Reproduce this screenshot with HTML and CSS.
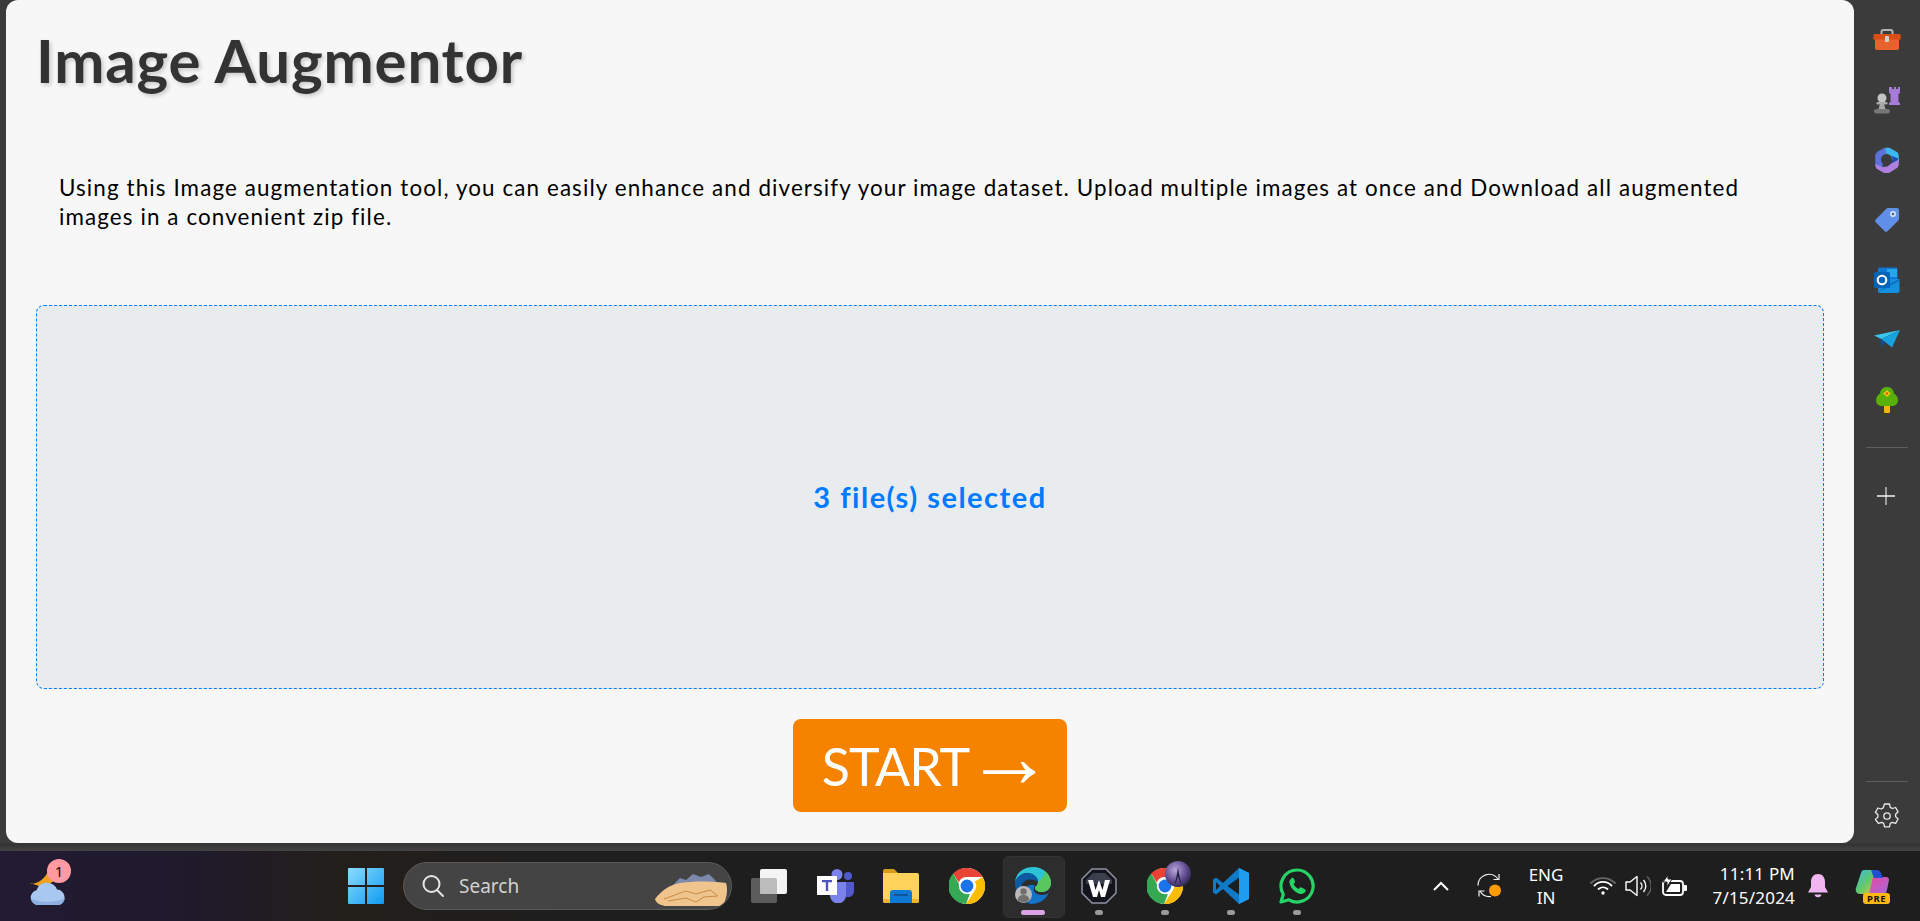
FILE: index.html
```html
<!DOCTYPE html>
<html>
<head>
    <meta charset="utf-8" />
    <title>Image Augmentor</title>
    <link rel="stylesheet" href="styles.css">
</head>
<body>
    <svg class="defs" width="0" height="0">
        <symbol id="chrome" viewBox="0 0 36 36">
            <circle cx="18" cy="18" r="18" fill="#fff" />
            <path d="M18 0a18 18 0 0 1 15.600 9H18a9 9 0 0 0-8.300 5.400L4.200 5.600A18 18 0 0 1 18 0z" fill="#ea4335" />
            <path d="M33.600 9A18 18 0 0 1 17 36l7.400-11.600A9 9 0 0 0 25.800 13.500z" fill="#fbbc04" />
            <path d="M17 36A18 18 0 0 1 4.200 5.600L11 18a8 8 0 0 0 10 7.800z" fill="#34a853" />
            <circle cx="18" cy="18" r="8.200" fill="#fff" />
            <circle cx="18" cy="18" r="6.400" fill="#1a73e8" />
        </symbol>
    </svg>

    <div class="window">
        <main class="panel">
            <h1 class="title">Image Augmentor</h1>
            <p class="intro">Using this Image augmentation tool, you can easily enhance and diversify your image dataset. Upload multiple images at once and Download all augmented images in a convenient zip file.</p>
            <div class="dropzone">3 file(s) selected</div>
            <div class="actions">
                <button class="start-btn"><span>START</span><span class="arrow">→</span></button>
            </div>
        </main>

        <aside class="sidebar">
            <div class="side-apps">
                <div class="side-icon">
                    <svg width="28" height="22" viewBox="0 0 28 22">
                        <path d="M8.500 6V3a2 2 0 0 1 2-2h7a2 2 0 0 1 2 2v3" fill="none" stroke="#b5b5b5" stroke-width="2" />
                        <path d="M2 7h24v12a2 2 0 0 1-2 2H4a2 2 0 0 1-2-2z" fill="#e8622c" />
                        <path d="M1.500 5h25a1 1 0 0 1 1 1l.5 4.500H0L.5 6a1 1 0 0 1 1-1z" fill="#d84e14" />
                        <rect x="12" y="7" width="4" height="6" rx="1" fill="#cfcfcf" />
                    </svg>
                </div>
                <div class="side-icon">
                    <svg width="28" height="28" viewBox="0 0 28 28">
                        <path d="M16 1h2v2h2V1h2v2h2V1h2v6l-1.500 1v8l1.500 1v2H15v-2l1.500-1V8L15 7V1z" fill="#a77bd8" transform="translate(1 0)" />
                        <circle cx="9" cy="12" r="4.500" fill="#c4c4c4" />
                        <rect x="3.500" y="16" width="11" height="2.500" rx="1.200" fill="#aaa" />
                        <path d="M7 18h4l1.500 5h-7z" fill="#a8a8a8" />
                        <rect x="1" y="23" width="16" height="4.500" rx="2.200" fill="#777" />
                    </svg>
                </div>
                <div class="side-icon">
                    <svg width="24" height="26" viewBox="0 0 24 26" stroke-width="1.500" stroke-linejoin="round">
                        <path d="M10 1.500L2.500 5.500 1 8v10l1.500 2.500L7 23V9.500L12 6.500z" fill="#5b72d8" stroke="#5b72d8" />
                        <path d="M11 1.500h3L22 6l1 2v7l-6-3.500-1-3.500-4-2z" fill="#3fb7ee" stroke="#3fb7ee" />
                        <path d="M1 18l6 3 6-1 4-3.500 6-3.500v5l-1 2-8 5c-2 1-3 1-5 0l-7-4z" fill="#b080e0" stroke="#b080e0" />
                        <path d="M16 8.500c2 2.500 2 6-.5 8.500l7.500-4v-1.500z" fill="#1d4fa8" stroke="none" />
                        <circle cx="11.500" cy="12.500" r="5.500" fill="#3b3b3b" stroke="none" />
                    </svg>
                </div>
                <div class="side-icon">
                    <svg width="26" height="26" viewBox="0 0 26 26">
                        <path d="M14 1h9a2 2 0 0 1 2 2v9a2 2 0 0 1-.6 1.400L13.500 24.300a2 2 0 0 1-2.800 0L1.700 15.300a2 2 0 0 1 0-2.800L12.600 1.600A2 2 0 0 1 14 1z" fill="#5f8fe6" />
                        <circle cx="19" cy="7" r="3" fill="#d6e4fb" />
                        <circle cx="19" cy="7" r="1.300" fill="#4a5f85" />
                    </svg>
                </div>
                <div class="side-icon">
                    <svg width="26" height="26" viewBox="0 0 26 26">
                        <path d="M4 2a1.500 1.500 0 0 1 1.500-1.500H22a1.500 1.500 0 0 1 1.500 1.500V12H4z" fill="#0f78d4" />
                        <rect x="13" y="2" width="10" height="8" fill="#28a8ea" />
                        <path d="M4 12h21.500v12a2 2 0 0 1-2 2H6a2 2 0 0 1-2-2z" fill="#1490df" />
                        <path d="M4 25l21.500-11V12L13 18z" fill="#0a5ba8" opacity=".6" />
                        <rect x="0" y="5" width="16" height="16" rx="1.500" fill="#0364b8" />
                        <circle cx="8" cy="13" r="4.300" fill="none" stroke="#fff" stroke-width="2" />
                    </svg>
                </div>
                <div class="side-icon">
                    <svg width="26" height="20" viewBox="0 0 26 20">
                        <path d="M0 5.500L26 0 7.500 9z" fill="#3cc4f0" />
                        <path d="M7.500 9L26 0 18 17.500z" fill="#16a3e0" />
                        <path d="M6.500 9l1 8 3.500-5z" fill="#0b4f9e" />
                        <path d="M0 5.500l6.500 3.500h1z" fill="#1c8fd6" />
                    </svg>
                </div>
                <div class="side-icon">
                    <svg width="22" height="26" viewBox="0 0 22 26">
                        <rect x="8" y="17" width="6" height="9" rx="1" fill="#f2b50c" />
                        <path d="M11 0c4 0 6.500 2.500 7 6.500 2.500 1.500 4 4 4 7 0 3-2.500 5.500-5.500 5.500h-11C2.500 19 0 16.500 0 13.500c0-3 1.500-5.500 4-7C4.500 2.500 7 0 11 0z" fill="#5ab00a" />
                        <path d="M11 3l2 2 2 1.500-2 1.500-2 2-2-2-2-1.500L9 5z" fill="#f7c412" />
                        <circle cx="11" cy="6.500" r="1.300" fill="#e8531d" />
                    </svg>
                </div>
            </div>
            <div class="side-sep"></div>
            <div class="side-add">
                <svg width="18" height="18" viewBox="0 0 18 18">
                    <path d="M0 9h18" stroke="#c6c6c6" stroke-width="2" />
                    <path d="M9 0v18" stroke="#fff" stroke-width="1" />
                </svg>
            </div>
            <div class="side-sep side-sep-end"></div>
            <div class="side-gear">
                <svg width="26" height="26" viewBox="0 0 26 26" fill="none" stroke="#ececec" stroke-width="1.300">
                    <path d="M10.500 1h5l.8 3.400 2 1.100 3.300-1 2.500 4.300-2.500 2.400v2.400l2.500 2.400-2.500 4.300-3.300-1-2 1.100-.8 3.400h-5l-.8-3.400-2-1.100-3.300 1L1.400 16.500l2.500-2.400v-2.400L1.400 9.300l2.500-4.300 3.300 1 2-1.100z" stroke-linejoin="round" />
                    <circle cx="13" cy="13" r="3.200" />
                </svg>
            </div>
        </aside>
    </div>

    <footer class="taskbar">
        <div class="weather">
            <svg width="36" height="36" viewBox="0 0 36 36">
                <path d="M19 0c-1 5 0 9 6 11l-11 8C8 17 2 14 0 15c8 0 16-6 19-15z" fill="#f0a020" />
                <path d="M8 36a7.500 7.500 0 0 1-1.500-14.800A11 11 0 0 1 27 20.500a7.800 7.800 0 0 1 1 15.500z" fill="#a9c8ef" />
                <path d="M1 29c6 5 26 5 34 0-1 4-3 7-7 7H8c-4 0-6-3-7-7z" fill="#8fb0e2" />
            </svg>
            <span class="weather-badge">1</span>
        </div>

        <div class="tb-start">
            <svg width="36" height="36" viewBox="0 0 36 36">
                <defs>
                    <linearGradient id="win" x1="0" y1="0" x2="1" y2="1">
                        <stop offset="0" stop-color="#8adcff" />
                        <stop offset="1" stop-color="#0f9bf0" />
                    </linearGradient>
                </defs>
                <path d="M1 0h16v17H0V1a1 1 0 0 1 1-1zM19 0h16a1 1 0 0 1 1 1v16H19zM0 19h17v17H1a1 1 0 0 1-1-1zM19 19h17v16a1 1 0 0 1-1 1H19z" fill="url(#win)" />
            </svg>
        </div>

        <div class="tb-search">
            <svg width="24" height="24" viewBox="0 0 24 24" fill="none" stroke="#e6e6e6" stroke-width="2">
                <circle cx="10.500" cy="10" r="8" />
                <path d="M16 16l6 6" stroke-linecap="round" />
            </svg>
            <span class="search-label">Search</span>
            <svg class="search-art" width="74" height="34" viewBox="0 0 74 34">
                <path d="M18 14l8-8 6 2 7-6 8 3 8-3 6 6 4 5z" fill="#7d88ad" />
                <path d="M1 27c6-8 14-14 25-16 14-2 30-2 46 0 2 6 1 14-3 23H11C6 33 2 31 1 27z" fill="#efc48d" />
                <path d="M10 27l22-8 10 3 14-4 8 6-14 1-8 5-10-4-18 3" fill="none" stroke="#c98a45" stroke-width="1" />
            </svg>
        </div>

        <div class="tb-apps">
            <div class="tb-slot">
                <svg width="36" height="36" viewBox="0 0 36 36">
                    <rect x="0" y="10" width="26" height="25" rx="2" fill="#5c5c5c" />
                    <rect x="9" y="1" width="27" height="25" rx="2" fill="#f4f4f4" />
                    <path d="M9 10h15a2 2 0 0 1 2 2v14H11a2 2 0 0 1-2-2z" fill="#bcbcbc" />
                </svg>
            </div>
            <div class="tb-slot">
                <svg width="37" height="34" viewBox="0 0 37 34">
                    <circle cx="20" cy="5.500" r="5.500" fill="#7b83eb" />
                    <circle cx="31" cy="7" r="4" fill="#5059c9" />
                    <path d="M25 13h12v9c0 4-3 6-6 6h-6z" fill="#5059c9" />
                    <path d="M11 13h18v13a8 8 0 0 1-16 1z" fill="#7b83eb" />
                    <rect x="0" y="7" width="20" height="19" fill="#fff" />
                    <path d="M5 11h10v2.200h-3.800V22H8.800v-8.800H5z" fill="#4b53bc" />
                </svg>
            </div>
            <div class="tb-slot">
                <svg width="36" height="34" viewBox="0 0 36 34">
                    <path d="M0 2a2 2 0 0 1 2-2h9l4 4h-15z" fill="#d99b1c" />
                    <path d="M0 4h34a2 2 0 0 1 2 2v26a2 2 0 0 1-2 2H2a2 2 0 0 1-2-2z" fill="#ffd25c" />
                    <path d="M0 30h36v2a2 2 0 0 1-2 2H2a2 2 0 0 1-2-2z" fill="#f0b429" />
                    <path d="M7 24a3 3 0 0 1 3-3h16a3 3 0 0 1 3 3v10H7z" fill="#0f78d4" />
                    <rect x="11" y="25" width="14" height="1.800" fill="#0a4f8f" />
                </svg>
            </div>
            <div class="tb-slot">
                <svg width="36" height="36"><use href="#chrome" /></svg>
            </div>
            <div class="tb-slot tb-slot-active">
                <svg width="36" height="37" viewBox="0 0 36 37">
                    <path d="M18 0c10 0 18 7 18 16 0 5-4 9-9 9-4 0-7-2-7-4 0-2 3-2 3-6 0-5-5-9-11-9C7 6 2 10 0 15 1 6 8 0 18 0z" fill="#2cc3d5" />
                    <path d="M23 15c0 4-3 4-3 6 0 2 3 4 7 4 5 0 9-4 9-9 0-5-3-10-8-13 3 3 2 6-5 12z" fill="#59c85c" />
                    <path d="M0 15c2-5 7-9 12-9 6 0 11 4 11 9-5-4-17-4-17 7 0 7 5 12 10 15C7 36 0 28 0 15z" fill="#0c59a4" />
                    <path d="M16 37c-4-2-7-5-7-11 0-7 8-10 11-7-3 3-1 9 7 9 3 0 6-1 7-3-3 8-10 12-18 12z" fill="#1473c9" />
                    <circle cx="8.500" cy="27.500" r="8.500" fill="#b9b9b9" />
                    <circle cx="8.500" cy="24.500" r="3.200" fill="#6f6f6f" />
                    <path d="M2.500 33c1-4 3-5 6-5s5 1 6 5a8.500 8.500 0 0 1-12 0z" fill="#6f6f6f" />
                </svg>
                <span class="dot dot-active"></span>
            </div>
            <div class="tb-slot">
                <svg width="36" height="36" viewBox="0 0 36 36">
                    <path d="M11 1h14l10 10v14L25 35H11L1 25V11z" fill="#14141c" stroke="#8f93a3" stroke-width="1.500" />
                    <path d="M12 5h12l7 7v4H5v-4z" fill="#3c3f4e" />
                    <path d="M7 12h5l2.500 10L18 12l3.500 10L24 12h5l-5 17h-4l-2-7-2 7h-4z" fill="#fff" />
                </svg>
                <span class="dot"></span>
            </div>
            <div class="tb-slot">
                <svg width="36" height="36"><use href="#chrome" /></svg>
                <svg class="profile-pic" width="26" height="26" viewBox="0 0 26 26">
                    <defs>
                        <radialGradient id="pic" cx=".4" cy=".35" r=".8">
                            <stop offset="0" stop-color="#b9a6dc" />
                            <stop offset=".55" stop-color="#5c4a8c" />
                            <stop offset="1" stop-color="#171432" />
                        </radialGradient>
                    </defs>
                    <circle cx="13" cy="13" r="13" fill="url(#pic)" />
                    <path d="M13 6l1 7 2 9h-1l-2-7-2 7h-1l2-9z" fill="#231c45" />
                </svg>
                <span class="dot"></span>
            </div>
            <div class="tb-slot">
                <svg width="36" height="36" viewBox="0 0 36 36">
                    <path d="M26 0l10 5v26l-10 5L10 21l-7 5.500-3-2V11.500l3-2L10 15z" fill="#0f7bc8" />
                    <path d="M26 0l10 5v26l-10 5z" fill="#1f9cf0" />
                    <path d="M26 9.500L14.500 18 26 26.500z" fill="#1e1e1e" />
                    <path d="M3 14l4 4-4 4z" fill="#1e1e1e" />
                </svg>
                <span class="dot"></span>
            </div>
            <div class="tb-slot">
                <svg width="36" height="36" viewBox="0 0 36 36">
                    <path d="M18 2a16 16 0 0 0-13.700 24.200L2 34l8-2.200A16 16 0 1 0 18 2z" fill="none" stroke="#25d366" stroke-width="3.200" stroke-linejoin="round" />
                    <path d="M13 10c-2 1-3 3-2.500 5 1 5 6 10 11 11 2 .5 4-1 5-2.500.5-1 0-2-1-2.500l-3-1.500c-1-.5-1.500 0-2 .5l-1 1c-2-1-4-3-5-5l1-1c.5-.5.8-1.200.3-2l-1-2.500c-.3-1-1-1-1.800-.5z" fill="#25d366" />
                </svg>
                <span class="dot"></span>
            </div>
        </div>

        <div class="tray">
            <div class="tray-item tray-chevron">
                <svg width="18" height="12" viewBox="0 0 18 12" fill="none" stroke="#fff" stroke-width="2">
                    <path d="M2 10l7-7 7 7" />
                </svg>
            </div>
            <div class="tray-item tray-sync">
                <svg width="25" height="25" viewBox="0 0 25 25" fill="none" stroke="#f2f2f2" stroke-width="1.200">
                    <path d="M1 12.500A11 11 0 0 1 21 6" />
                    <path d="M22 1v5.500h-5.500" />
                    <path d="M3 18A11 11 0 0 0 14 23.500" />
                    <path d="M2 23.500V18h5.500" />
                    <circle cx="18" cy="17.500" r="6" fill="#ff9a00" stroke="none" />
                </svg>
            </div>
            <div class="tray-item tray-lang">
                <span>ENG</span>
                <span>IN</span>
            </div>
            <div class="tray-item tray-wifi">
                <svg width="26" height="20" viewBox="0 0 26 20" fill="none" stroke="#fff" stroke-width="1.800" stroke-linecap="round">
                    <path d="M1 7a17 17 0 0 1 24 0" stroke="#666" />
                    <path d="M4.500 9.500a12 12 0 0 1 17 0" />
                    <path d="M8.500 13a7 7 0 0 1 9 0" />
                    <circle cx="13" cy="17" r="1.700" fill="#fff" stroke="none" />
                </svg>
            </div>
            <div class="tray-item tray-volume">
                <svg width="26" height="24" viewBox="0 0 26 24" fill="none" stroke="#fff" stroke-width="1.400">
                    <path d="M1 8h4l7-5.500v19L5 16H1z" stroke-linejoin="round" />
                    <path d="M15.500 8.500a5 5 0 0 1 0 7" />
                    <path d="M18.500 6a9 9 0 0 1 0 12" />
                    <path d="M22 2.500a13 13 0 0 1 0 19" stroke="#666" />
                </svg>
            </div>
            <div class="tray-item tray-battery">
                <svg width="26" height="22" viewBox="0 0 26 22" fill="none" stroke="#fff" stroke-width="1.800">
                    <rect x="1" y="6" width="20" height="14" rx="3" />
                    <path d="M4 17L9 9h9v8z" fill="#fff" stroke="none" />
                    <path d="M22 10h2a1 1 0 0 1 1 1v4a1 1 0 0 1-1 1h-2z" fill="#fff" stroke="none" />
                    <path d="M6 0L1 7h4v5l5-8H6z" fill="#fff" stroke="#1f1f1f" stroke-width="1" />
                </svg>
            </div>
            <div class="tray-clock">
                <span>11:11 PM</span>
                <span>7/15/2024</span>
            </div>
            <div class="tray-item tray-bell">
                <svg width="20" height="24" viewBox="0 0 20 24">
                    <path d="M10 0c4.500 0 7 3.500 7 8v5l3 5.500H0L3 13V8c0-4.500 2.500-8 7-8z" fill="#f1b6ef" />
                    <path d="M6.500 20.500h7a3.600 3.600 0 0 1-7 0z" fill="#f1b6ef" />
                </svg>
            </div>
            <div class="tray-item tray-copilot">
                <svg width="34" height="25" viewBox="0 0 34 25">
                    <defs>
                        <linearGradient id="cp1" x1="0" y1="0" x2="1" y2="1">
                            <stop offset="0" stop-color="#3fb8e8" />
                            <stop offset=".5" stop-color="#5fc96b" />
                            <stop offset="1" stop-color="#f3c33c" />
                        </linearGradient>
                        <linearGradient id="cp2" x1="0" y1="0" x2="1" y2="1">
                            <stop offset="0" stop-color="#e8469b" />
                            <stop offset="1" stop-color="#a46be0" />
                        </linearGradient>
                    </defs>
                    <path d="M9 0h14l-6 20c-1 3-2 4-5 4H5c-3 0-5-3-4-6L6 3c.5-2 1.500-3 3-3z" fill="url(#cp1)" />
                    <path d="M18 7h13c2 0 3 1 3 3l-2 10c-.5 3-2 4-5 4H14z" fill="url(#cp2)" />
                    <path d="M16 0h6c2 0 3 1 4 3l2 5h-9z" fill="#1f4fd0" />
                </svg>
                <span class="pre-badge">PRE</span>
            </div>
        </div>
    </footer>
</body>
</html>
```

FILE: styles.css
```css
* {
    box-sizing: border-box;
}

html,
body {
    margin: 0;
    padding: 0;
    height: 100%;
}

body {
    display: flex;
    flex-direction: column;
    background-color: #3b3b3b;
    font-family: "Noto Sans", sans-serif;
    overflow: hidden;
}

.defs {
    position: absolute;
}

.window {
    display: flex;
    height: 851px;
    padding-bottom: 8px;
    padding-left: 6px;
    background: linear-gradient(to bottom, #3b3b3b 843px, #333 844px, #444 851px);
}

.panel {
    width: 1848px;
    height: 843px;
    padding: 23px 30px 0;
    background-color: #f7f7f7;
    border-radius: 12px;
    font-family: Lato, sans-serif;
}

.title {
    margin: 0;
    color: #333;
    font-size: 60px;
    line-height: 74px;
    font-weight: 700;
    letter-spacing: 0.8px;
    text-shadow: 2px 2px 4px rgba(0, 0, 0, 0.2);
}

.intro {
    margin: 76px 0 0;
    padding: 0 60px 0 23px;
    color: #000;
    font-size: 22.4px;
    line-height: 29px;
    letter-spacing: 1.11px;
}

.dropzone {
    display: flex;
    align-items: center;
    justify-content: center;
    height: 384px;
    margin-top: 74px;
    padding-bottom: 2px;
    background-color: #e9ecef;
    border: 1px dashed #007bff;
    border-radius: 8px;
    color: #007bff;
    font-size: 29px;
    font-weight: 700;
    letter-spacing: 1.5px;
}

.actions {
    display: flex;
    justify-content: center;
    margin-top: 30px;
}

.start-btn {
    display: flex;
    align-items: center;
    justify-content: center;
    width: 274px;
    height: 93px;
    padding: 0 0 0 15px;
    background-color: #f58300;
    border: 0;
    border-radius: 8px;
    color: #fff;
    font-family: Lato, sans-serif;
    font-size: 52px;
    letter-spacing: -1px;
}

.arrow {
    margin-bottom: 18px;
    margin-left: -4px;
    font-family: "Liberation Sans", sans-serif;
    font-size: 88px;
    line-height: 0;
    letter-spacing: 0;
}

.sidebar {
    display: flex;
    flex: 1;
    flex-direction: column;
    align-items: center;
}

.side-apps {
    display: flex;
    flex-direction: column;
    padding-top: 10px;
}

.side-icon {
    display: flex;
    align-items: center;
    justify-content: center;
    width: 60px;
    height: 60px;
}

.side-sep {
    width: 42px;
    height: 1px;
    margin-top: 17px;
    background-color: #5e5e5e;
}

.side-sep-end {
    margin-top: auto;
}

.side-add {
    display: flex;
    align-items: center;
    justify-content: center;
    width: 42px;
    height: 18px;
    margin-top: 39px;
    padding-right: 2px;
}

.side-gear {
    display: flex;
    margin-top: 21px;
    margin-bottom: 14px;
}

.taskbar {
    display: flex;
    align-items: center;
    height: 70px;
    padding-right: 17px;
    padding-bottom: 1px;
    background: linear-gradient(to right, #221b33 0, #1f1a2c 180px, #231f1b 340px, #1e1e1e 560px);
    color: #fff;
}

.weather {
    position: relative;
    display: flex;
    align-items: center;
    justify-content: center;
    width: 96px;
    height: 69px;
    padding-top: 2px;
}

.weather-badge {
    position: absolute;
    top: 8px;
    left: 47px;
    width: 24px;
    height: 24px;
    background-color: #ff9aa2;
    border-radius: 50%;
    color: #111;
    font-size: 15px;
    line-height: 24px;
    text-align: center;
}

.tb-start {
    display: flex;
    align-items: center;
    justify-content: center;
    width: 66px;
    margin-left: 237px;
}

.tb-search {
    display: flex;
    align-items: center;
    width: 329px;
    height: 48px;
    margin-left: 4px;
    padding-left: 17px;
    background-color: #444;
    border: 1px solid #5a5a5a;
    border-radius: 24px;
    overflow: hidden;
}

.search-label {
    margin-left: 14px;
    color: #d2d2d2;
    font-size: 19px;
}

.search-art {
    margin-left: auto;
    margin-right: 3px;
    align-self: flex-end;
    margin-bottom: 3px;
}

.tb-apps {
    display: flex;
    margin-left: 4px;
}

.tb-slot {
    position: relative;
    display: flex;
    align-items: center;
    justify-content: center;
    width: 66px;
    height: 60px;
}

.tb-slot-active::before {
    content: "";
    position: absolute;
    top: 0;
    left: 3px;
    width: 60px;
    height: 60px;
    background-color: #2d2d2d;
    border: 1px solid #333;
    border-radius: 6px;
}

.tb-slot svg {
    position: relative;
}

.tb-slot .profile-pic {
    position: absolute;
    top: 5px;
    left: 33px;
}

.dot {
    position: absolute;
    left: 29px;
    bottom: 1px;
    width: 8px;
    height: 5px;
    background-color: #9b9b9b;
    border-radius: 3px;
}

.dot-active {
    left: 21px;
    width: 24px;
    background-color: #dba3e6;
}

.tray {
    display: flex;
    align-items: center;
    margin-left: auto;
    height: 69px;
}

.tray-item {
    display: flex;
    align-items: center;
    justify-content: center;
}

.tray-chevron {
    width: 40px;
}

.tray-sync {
    width: 56px;
}

.tray-lang {
    flex-direction: column;
    width: 58px;
    font-size: 17px;
    line-height: 23px;
}

.tray-wifi {
    width: 36px;
    margin-left: 10px;
}

.tray-volume {
    width: 34px;
}

.tray-battery {
    width: 40px;
}

.tray-clock {
    display: flex;
    flex-direction: column;
    align-items: flex-end;
    width: 100px;
    font-size: 17px;
    line-height: 24px;
    letter-spacing: 0.2px;
}

.tray-bell {
    width: 46px;
}

.tray-copilot {
    position: relative;
    width: 62px;
    height: 44px;
    padding-bottom: 6px;
}

.pre-badge {
    position: absolute;
    left: 22px;
    bottom: 4px;
    width: 27px;
    height: 11px;
    background-color: #fdb913;
    border-radius: 3px;
    color: #111;
    font-size: 9.500px;
    font-weight: 700;
    line-height: 11px;
    letter-spacing: 0.500px;
    text-align: center;
}
```
